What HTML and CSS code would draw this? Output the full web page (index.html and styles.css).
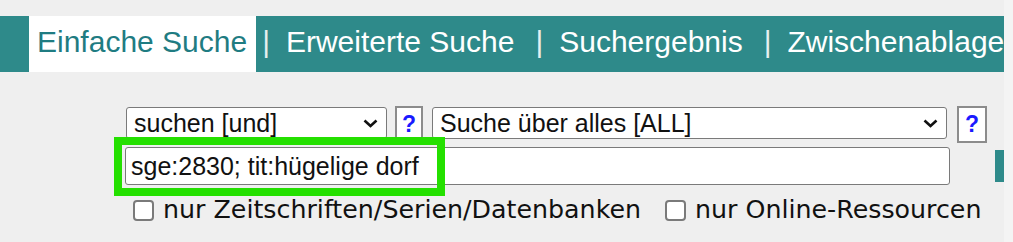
FILE: index.html
```html
<!DOCTYPE html>
<html lang="de">
<head>
<meta charset="UTF-8">
<meta name="viewport" content="width=device-width, initial-scale=1.0">
<title>Einfache Suche</title>
<link rel="stylesheet" href="styles.css">
</head>
<body>
    <div class="page">
        <div class="tabbar">
            <span class="tab-lead"></span>
            <a class="tab active" href="#">Einfache Suche</a>
            <span class="sep first">|</span>
            <a class="tab" href="#">Erweiterte Suche</a>
            <span class="sep">|</span>
            <a class="tab" href="#">Suchergebnis</a>
            <span class="sep">|</span>
            <a class="tab" href="#">Zwischenablage</a>
        </div>

        <form class="search" onsubmit="return false;">
            <div class="row select-row">
                <span class="select-wrap op">
                    <select>
                        <option>suchen [und]</option>
                        <option>suchen [oder]</option>
                    </select>
                    <svg class="chevron" viewBox="0 0 15 9"><polyline points="1.5,1.5 7.5,7 13.5,1.5"/></svg>
                </span>
                <button type="button" class="help">?</button>
                <span class="select-wrap index">
                    <select>
                        <option>Suche über alles [ALL]</option>
                    </select>
                    <svg class="chevron" viewBox="0 0 15 9"><polyline points="1.5,1.5 7.5,7 13.5,1.5"/></svg>
                </span>
                <button type="button" class="help second">?</button>
            </div>

            <div class="row query-row">
                <input type="text" class="query" value="sge:2830; tit:hügelige dorf">
                <button type="submit" class="go" aria-label="Suchen"></button>
            </div>

            <div class="row filters">
                <label class="filter"><input type="checkbox">nur Zeitschriften/Serien/Datenbanken</label>
                <label class="filter"><input type="checkbox">nur Online-Ressourcen</label>
            </div>
        </form>

        <!-- marker drawn around the query field -->
        <div class="highlight"></div>
    </div>
</body>
</html>
```

FILE: styles.css
```css
body {
    margin: 0;
    padding: 0;
    background-color: #f4f4f4;
    font-family: "Liberation Sans", Arial, sans-serif;
}

.page {
    position: relative;
    width: 1004px;
    height: 242px;
    overflow: hidden;
    background-color: #efefef;
}

/* tabs */

.tabbar {
    display: flex;
    margin-top: 16px;
    height: 56px;
    background-color: #2e8a8a;
    white-space: nowrap;
    font-size: 30px;
    line-height: 34px;
}

.tab-lead {
    width: 29px;
    flex-shrink: 0;
}

.tab {
    color: #ffffff;
    text-decoration: none;
    padding-top: 9px;
}

.tab.active {
    background-color: #ffffff;
    color: #1f7c82;
    padding: 9px 9px 0 8px;
}

.sep {
    color: #e6efef;
    padding-top: 9px;
    margin: 0 16px 0 21px;
}

.sep.first {
    margin-left: 6px;
}

/* search form */

.search {
    padding-left: 126px;
}

.row {
    display: flex;
}

.select-row {
    margin-top: 34px;
    align-items: flex-start;
}

.select-wrap {
    position: relative;
    display: block;
    margin-top: 1px;
}

.select-wrap select {
    appearance: none;
    -webkit-appearance: none;
    display: block;
    height: 32px;
    margin: 0;
    padding: 0 30px 0 7px;
    border: 1px solid #7a7a7a;
    border-radius: 3px;
    background-color: #ffffff;
    color: #111111;
    font-family: "Liberation Sans", Arial, sans-serif;
    font-size: 25px;
}

.select-wrap.op select {
    width: 261px;
}

.select-wrap.index {
    margin-left: 9px;
}

.select-wrap.index select {
    width: 515px;
}

.chevron {
    position: absolute;
    right: 9px;
    top: 12px;
    width: 15px;
    height: 9px;
    pointer-events: none;
}

.chevron polyline {
    fill: none;
    stroke: #111111;
    stroke-width: 2.6;
}

.help {
    width: 28px;
    height: 37px;
    margin: 0 0 0 8px;
    padding: 0;
    border: 2px solid #8c8c8c;
    background-color: #ffffff;
    color: #1a1aff;
    font-family: "Liberation Sans", Arial, sans-serif;
    font-size: 23px;
    font-weight: bold;
    line-height: 1;
    cursor: pointer;
}

.help.second {
    width: 30px;
    margin-left: 10px;
}

.query-row {
    margin-top: 4px;
    align-items: center;
}

.query {
    flex-shrink: 0;
    width: 825px;
    height: 38px;
    margin: 0 0 0 -1px;
    padding: 0 5px;
    box-sizing: border-box;
    border: 1px solid #7a7a7a;
    border-radius: 3px;
    background-color: #ffffff;
    color: #111111;
    font-family: "Liberation Sans", Arial, sans-serif;
    font-size: 25px;
}

.go {
    flex-shrink: 0;
    width: 80px;
    height: 32px;
    margin-left: 45px;
    border: none;
    background-color: #2e8a8a;
}

.filters {
    margin-top: 10px;
    padding-left: 7px;
    font-family: "DejaVu Sans", Verdana, sans-serif;
    font-size: 25.3px;
    line-height: 30px;
    color: #111111;
    white-space: nowrap;
}

.filter {
    display: flex;
    align-items: center;
}

.filter + .filter {
    margin-left: 24px;
}

.filter input {
    appearance: none;
    -webkit-appearance: none;
    flex-shrink: 0;
    width: 21px;
    height: 21px;
    margin: 0 9px 0 0;
    border: 2px solid #7a7a7a;
    border-radius: 4px;
    background-color: #ffffff;
}

.highlight {
    position: absolute;
    left: 114px;
    top: 137px;
    width: 331px;
    height: 59px;
    box-sizing: border-box;
    border: 8px solid #24e000;
}
```
